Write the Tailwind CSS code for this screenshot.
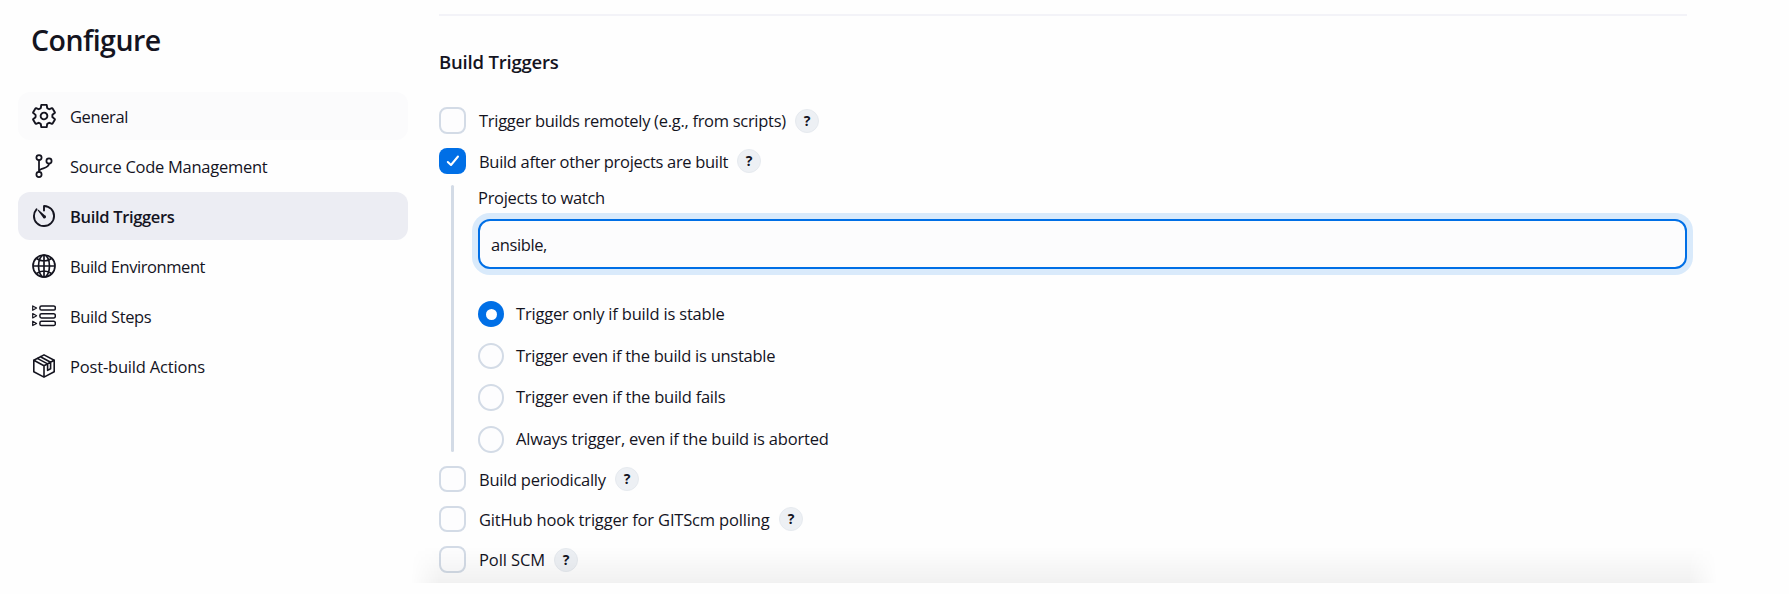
<!DOCTYPE html>
<html lang="en">
<head>
<meta charset="utf-8">
<title>Configure</title>
<script src="https://cdn.jsdelivr.net/npm/@tailwindcss/browser@4"></script>
</head>
<body class="bg-[#fefefe] text-[#14141f]">
<div class="relative flex h-[594px] w-[1789px] overflow-hidden font-['Open_Sans',sans-serif] text-[16.5px] leading-6 whitespace-nowrap">

  <aside class="w-[408px] shrink-0 pl-[18px]">
    <h1 class="mt-5 mb-8 pl-[13px] text-[28.5px] leading-10 font-semibold tracking-[-0.54px]">Configure</h1>
    <nav class="flex flex-col gap-0.5">
      <a class="flex h-12 items-center gap-3.5 rounded-xl bg-[#fbfbfc] pl-3.5">
        <svg class="size-6 shrink-0" viewBox="27 27 458 458" fill="none" stroke="currentColor" stroke-width="36" stroke-linecap="round" stroke-linejoin="round"><path d="M262.29 192.31a64 64 0 1 0 57.4 57.4 64.13 64.13 0 0 0-57.4-57.4zM416.39 256a154.34 154.34 0 0 1-1.53 20.79l45.21 35.46a10.81 10.81 0 0 1 2.45 13.75l-42.77 74a10.81 10.81 0 0 1-13.14 4.59l-44.9-18.08a16.11 16.11 0 0 0-15.17 1.75A164.48 164.48 0 0 1 325 400.8a15.94 15.94 0 0 0-8.82 12.14l-6.73 47.89a11.08 11.08 0 0 1-10.68 9.17h-85.54a11.11 11.11 0 0 1-10.69-8.87l-6.72-47.82a16.07 16.07 0 0 0-9-12.22 155.3 155.3 0 0 1-21.46-12.57 16 16 0 0 0-15.11-1.71l-44.89 18.07a10.81 10.81 0 0 1-13.14-4.58l-42.77-74a10.8 10.8 0 0 1 2.45-13.75l38.21-30a16.05 16.05 0 0 0 6-14.08c-.36-4.17-.58-8.33-.58-12.5s.21-8.27.58-12.35a16 16 0 0 0-6.07-13.94l-38.19-30A10.81 10.81 0 0 1 49.48 186l42.77-74a10.81 10.81 0 0 1 13.14-4.59l44.9 18.08a16.11 16.11 0 0 0 15.17-1.75A164.48 164.48 0 0 1 187 111.2a15.94 15.94 0 0 0 8.82-12.14l6.73-47.89A11.08 11.08 0 0 1 213.23 42h85.54a11.11 11.11 0 0 1 10.69 8.87l6.72 47.82a16.07 16.07 0 0 0 9 12.22 155.3 155.3 0 0 1 21.46 12.57 16 16 0 0 0 15.11 1.71l44.89-18.07a10.81 10.81 0 0 1 13.14 4.58l42.77 74a10.8 10.8 0 0 1-2.45 13.75l-38.21 30a16.05 16.05 0 0 0-6.05 14.08c.33 4.14.55 8.3.55 12.47z"/></svg>
        <span class="mt-px tracking-[-0.4px]">General</span>
      </a>
      <a class="flex h-12 items-center gap-3.5 rounded-xl pl-3.5">
        <svg class="size-6 shrink-0" viewBox="0 0 24 24" fill="none" stroke="currentColor" stroke-width="1.75" stroke-linecap="round"><circle cx="7" cy="3.6" r="2.6"/><circle cx="7" cy="20.4" r="2.6"/><circle cx="17" cy="7" r="2.6"/><path d="M7 6.4v11.300M17 9.600c0 6-10 3.600-10 8"/></svg>
        <span class="mt-px tracking-[-0.27px]">Source Code Management</span>
      </a>
      <a class="flex h-12 items-center gap-3.5 rounded-xl bg-[#ecedf3] pl-3.5">
        <svg class="size-6 shrink-0" viewBox="27 27 458 458" fill="none" stroke="currentColor" stroke-width="36" stroke-linecap="round" stroke-linejoin="round"><path d="M112.910 128A191.850 191.850 0 0 0 64 254c-1.180 106.350 85.650 193.800 192 194 106.200.2 192-85.830 192-192 0-104.540-83.550-189.610-187.500-192a4.360 4.360 0 0 0-4.500 4.370V152"/><path fill="currentColor" stroke="none" d="m233.380 278.630-96-128a8.850 8.850 0 0 1 13.100-12.100l121 102a31.200 31.200 0 1 1-38.100 38.100z"/></svg>
        <span class="mt-px font-semibold tracking-[-0.33px]">Build Triggers</span>
      </a>
      <a class="flex h-12 items-center gap-3.5 rounded-xl pl-3.5">
        <svg class="size-6 shrink-0" viewBox="0 0 24 24" fill="none" stroke="currentColor" stroke-width="1.7"><circle cx="12" cy="12" r="11"/><ellipse cx="12" cy="12" rx="5.5" ry="11"/><path d="M12 1v22M1 12h22M4.500 4.500c4.500 3.200 10.500 3.200 15 0M4.500 19.500c4.500-3.200 10.500-3.200 15 0"/></svg>
        <span class="mt-px tracking-[-0.44px]">Build Environment</span>
      </a>
      <a class="flex h-12 items-center gap-3.5 rounded-xl pl-3.5">
        <svg class="size-6 shrink-0" viewBox="0 0 24 24" fill="none" stroke="currentColor" stroke-width="1.5" stroke-linejoin="round"><rect x="7.900" y="1.900" width="15.400" height="4.200" rx="1.600"/><rect x="7.900" y="9.700" width="15.400" height="4.200" rx="1.600"/><rect x="7.900" y="17.300" width="15.400" height="4.200" rx="1.600"/><path stroke-width="1.2" d="M.7 1.900v4.400l3.900-2.200zM.7 9.600v4.400l3.900-2.200zM.7 17.200v4.400l3.900-2.200z"/></svg>
        <span class="mt-px tracking-[-0.4px]">Build Steps</span>
      </a>
      <a class="flex h-12 items-center gap-3.5 rounded-xl pl-3.5">
        <svg class="size-6 shrink-0" viewBox="0 0 24 24" fill="none" stroke="currentColor" stroke-width="1.6" stroke-linejoin="round" stroke-linecap="round"><path d="M12 .9 22.200 6.200v11.600L12 23.100 1.800 17.800V6.200zM1.800 6.200 12 11.700l10.200-5.500M12 11.700v11.400M5.300 4.400l10.300 5.500v6.500l3-1.700V8.200L8.500 2.700"/></svg>
        <span class="mt-px tracking-[-0.18px]">Post-build Actions</span>
      </a>
    </nav>
  </aside>

  <main class="ml-[31px] flex w-[1248px] flex-col pt-3.5">
    <div class="h-0.5 shrink-0 bg-[#f3f3f8]"></div>
    <h2 class="mt-[34px] text-[18.5px] leading-6 font-semibold tracking-[-0.2px]">Build Triggers</h2>

    <div class="mt-[33px] flex h-[27px] items-center">
      <span class="h-[27px] w-[27px] rounded-lg border-2 border-[#d3dbe6] bg-[#fdfdfe]"></span>
      <span class="ml-[13px] w-[316px] tracking-[-0.29px]">Trigger builds remotely (e.g., from scripts)</span>
      <span class="flex size-6 items-center justify-center rounded-full border border-[#e6eaef] bg-[#edf0f4] text-[14px] font-bold">?</span>
    </div>
    <div class="mt-3.5 flex h-[26px] items-center">
      <span class="flex h-[26px] w-[27px] items-center justify-center rounded-lg bg-[#006fe6]">
        <svg class="size-3.5" viewBox="0 0 14 14" fill="none" stroke="white" stroke-width="2" stroke-linecap="round" stroke-linejoin="round"><path d="M1.800 8 5 11l7-8.500"/></svg>
      </span>
      <span class="mt-0.5 ml-[13px] w-[258px] tracking-[-0.32px]">Build after other projects are built</span>
      <span class="flex size-6 items-center justify-center rounded-full border border-[#e6eaef] bg-[#edf0f4] text-[14px] font-bold">?</span>
    </div>

    <div class="mt-[11px] ml-3 flex h-[267px]">
      <div class="w-[3px] shrink-0 rounded-full bg-[#d3dbe6]"></div>
      <div class="ml-6 w-[1209px]">
        <div class="h-[34px] pt-px tracking-[-0.3px]">Projects to watch</div>
        <div class="flex h-[50px] items-center rounded-xl border-2 border-[#006fe6] bg-[#fcfcfd] pt-0.5 pl-[11px] tracking-[-0.4px] ring-6 ring-[#d9eafb]">ansible,</div>
        <div class="mt-8 flex h-[26px] items-center gap-3">
          <span class="flex size-[26px] items-center justify-center rounded-full bg-[#006fe6]"><span class="size-[11px] rounded-full bg-white"></span></span>
          <span class="tracking-[-0.2px]">Trigger only if build is stable</span>
        </div>
        <div class="mt-4 flex h-[26px] items-center gap-3">
          <span class="size-[26px] rounded-full border-2 border-[#d3dbe6] bg-[#fdfdfe]"></span>
          <span class="tracking-[-0.26px]">Trigger even if the build is unstable</span>
        </div>
        <div class="mt-[15px] flex h-[27px] items-center gap-3">
          <span class="h-[27px] w-[26px] rounded-full border-2 border-[#d3dbe6] bg-[#fdfdfe]"></span>
          <span class="-mt-px tracking-[-0.24px]">Trigger even if the build fails</span>
        </div>
        <div class="mt-[15px] flex h-[27px] items-center gap-3">
          <span class="h-[27px] w-[26px] rounded-full border-2 border-[#d3dbe6] bg-[#fdfdfe]"></span>
          <span class="-mt-px tracking-[-0.2px]">Always trigger, even if the build is aborted</span>
        </div>
      </div>
    </div>

    <div class="mt-3.5 flex h-[26px] items-center">
      <span class="h-[26px] w-[27px] rounded-lg border-2 border-[#d3dbe6] bg-[#fdfdfe]"></span>
      <span class="mt-0.5 ml-[13px] w-[136px] tracking-[-0.27px]">Build periodically</span>
      <span class="flex size-6 items-center justify-center rounded-full border border-[#e6eaef] bg-[#edf0f4] text-[14px] font-bold">?</span>
    </div>
    <div class="mt-3.5 flex h-[26px] items-center">
      <span class="h-[26px] w-[27px] rounded-lg border-2 border-[#d3dbe6] bg-[#fdfdfe]"></span>
      <span class="mt-0.5 ml-[13px] w-[300px] tracking-[-0.17px]">GitHub hook trigger for GITScm polling</span>
      <span class="flex size-6 items-center justify-center rounded-full border border-[#e6eaef] bg-[#edf0f4] text-[14px] font-bold">?</span>
    </div>
    <div class="mt-3.5 flex h-[27px] items-center">
      <span class="h-[27px] w-[27px] rounded-lg border-2 border-[#d3dbe6] bg-[#fdfdfe]"></span>
      <span class="ml-[13px] w-[75px] tracking-[-0.1px]">Poll SCM</span>
      <span class="flex size-6 items-center justify-center rounded-full border border-[#e6eaef] bg-[#edf0f4] text-[14px] font-bold">?</span>
    </div>
  </main>

  <!-- Fade at the bottom edge of the scrolling form -->
  <div class="pointer-events-none absolute top-[547px] left-[411px] h-[36px] w-[1306px] bg-linear-to-b from-black/0 to-black/5 mask-x-from-[calc(100%-28px)] mask-x-to-100%"></div>
</div>
</body>
</html>
